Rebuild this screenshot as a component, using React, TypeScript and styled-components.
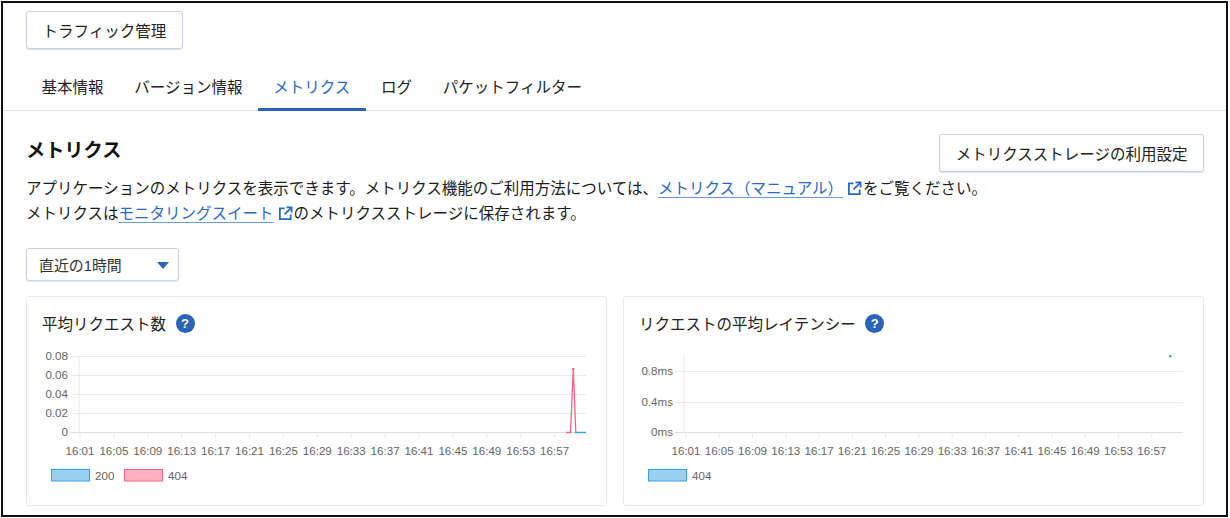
import React from "react";
import styled, { createGlobalStyle } from "styled-components";

const Global = createGlobalStyle`
  html, body { margin: 0; padding: 0; background: #fff; }
  body { font-family: "Liberation Sans", "Noto Sans CJK JP", sans-serif; color: #1c1c1c; }
`;

const Frame = styled.div`
  box-sizing: border-box;
  margin: 1px 0 0 1px;
  width: 1227px;
  height: 516px;
  border: 2px solid #111;
  padding-top: 8px;
  overflow: hidden;
  background: #fff;
`;

const Btn = styled.button`
  box-sizing: border-box;
  height: 38px;
  padding: 0 15.5px;
  background: #fff;
  border: 1px solid #c9d0e0;
  border-radius: 3px;
  box-shadow: 0 1px 1px rgba(120, 135, 170, 0.25);
  font: inherit;
  font-size: 15.5px;
  color: #222;
  white-space: nowrap;
`;

const Top = styled.div`
  padding-left: 23px;
`;

const TabBar = styled.div`
  display: flex;
  height: 62px;
  box-sizing: border-box;
  padding: 19px 0 0 23px;
  border-bottom: 1px solid #dfe3ec;
`;

const Tab = styled.div<{ $active?: boolean }>`
  box-sizing: border-box;
  height: 43px;
  padding: 0 15.4px;
  line-height: 40px;
  font-size: 15.5px;
  white-space: nowrap;
  color: ${(p) => (p.$active ? "#2a69c4" : "#222")};
  border-bottom: 3px solid ${(p) => (p.$active ? "#2a63b7" : "transparent")};
`;

const Section = styled.div`
  padding: 23px 22px 0 23px;
`;

const HeadRow = styled.div`
  display: flex;
  justify-content: space-between;
  align-items: flex-start;
  height: 38px;
`;

const Heading = styled.h2`
  margin: 0;
  font-size: 19.2px;
  line-height: 34px;
  font-weight: 700;
  color: #111;
`;

const Para = styled.p`
  margin: 4px 0 0;
  font-size: 15.5px;
  line-height: 25px;
  color: #1c1c1c;
  white-space: nowrap;
`;

const A = styled.a`
  color: #2a69c4;
  text-decoration: underline;
  text-decoration-color: #6a9bdc;
  text-decoration-thickness: 1px;
  text-underline-offset: 3px;
`;

const ExtIcon = styled.svg`
  width: 15px;
  height: 15px;
  margin: 0 1px 0 4px;
  vertical-align: -2px;
`;

const Select = styled.div`
  box-sizing: border-box;
  display: flex;
  align-items: center;
  justify-content: space-between;
  width: 153px;
  height: 33px;
  margin-top: 22px;
  padding: 0 7px 1px 12px;
  border: 1px solid #c9d0e0;
  border-radius: 3px;
  box-shadow: 0 1px 1px rgba(120, 135, 170, 0.2);
  font-size: 14.9px;
  color: #333;
`;

const Arrow = styled.span`
  width: 0;
  height: 0;
  margin-top: 2px;
  margin-right: 2px;
  border-left: 6px solid transparent;
  border-right: 6px solid transparent;
  border-top: 7px solid #2a63b7;
`;

const Cards = styled.div`
  display: grid;
  grid-template-columns: 581px 581px;
  gap: 16px;
  margin-top: 15px;
`;

const Card = styled.div`
  box-sizing: border-box;
  height: 210px;
  padding: 0 16px;
  border: 1px solid #e7e9ef;
  border-radius: 3px;
`;

const CardHead = styled.div`
  box-sizing: border-box;
  display: flex;
  align-items: center;
  gap: 9.5px;
  height: 48px;
  padding-top: 4px;
  margin-left: -1px;
  font-size: 15.5px;
  color: #222;
`;

const Help = styled.span`
  display: flex;
  align-items: center;
  justify-content: center;
  width: 19px;
  height: 19px;
  border-radius: 50%;
  background: #2a63b7;
  color: #fff;
  font-size: 13px;
  font-weight: 700;
`;

const ChartSvg = styled.svg`
  display: block;
  width: 549px;
  height: 145px;
  font-family: "Liberation Sans", sans-serif;
  font-size: 11.6px;
  fill: #666;
`;

const Legend = styled.g`
  font-size: 11.6px;
`;

const times = ["16:01","16:05","16:09","16:13","16:17","16:21","16:25","16:29","16:33","16:37","16:41","16:45","16:49","16:53","16:57"];
const GRID = "#e8e9ee";
const BLUE = "#36a2eb";
const PINK = "#ff6384";

function Ext() {
  return (
    <ExtIcon viewBox="0 0 16 16" fill="none" stroke="#2a69c4" strokeWidth="1.9">
      <path d="M7 2.5H2v11.5h11.5V9" />
      <path d="M9 1.5h5.5V7" />
      <path d="M14 2L7 9" />
    </ExtIcon>
  );
}

type Y = { y: number; label: string };

function Chart(props: {
  ox: number;
  axisX: number;
  endX: number;
  topY: number;
  firstTick: number;
  step: number;
  ys: Y[];
  legend: { x: number; color: string; fill: string; label: string }[];
  children?: React.ReactNode;
}) {
  const { ox, axisX, endX, topY, firstTick, step, ys, legend, children } = props;
  const oy = 345;
  const bottom = 432.5 - oy;
  return (
    <ChartSvg viewBox="0 0 549 145">
      <line x1={axisX - ox} x2={axisX - ox} y1={topY - oy} y2={bottom} stroke={GRID} strokeWidth="1" />
      {ys.map((t) => (
        <g key={t.label}>
          <line x1={axisX - 8.5 - ox} x2={endX - ox} y1={t.y - oy} y2={t.y - oy} stroke={t.y > 432 ? "#dcdde3" : GRID} strokeWidth="1" />
          <text x={axisX - 11 - ox} y={t.y - oy + 3.5} textAnchor="end">{t.label}</text>
        </g>
      ))}
      {times.map((t, i) => {
        const x = firstTick + step * i - ox;
        return (
          <g key={t}>
            <line x1={x} x2={x} y1={bottom} y2={bottom + 5} stroke={GRID} strokeWidth="1" />
            <text x={x} y={109.5} textAnchor="middle">{t}</text>
          </g>
        );
      })}
      {children}
      <Legend>
        {legend.map((l) => (
          <g key={l.label + l.x}>
            <rect x={l.x - ox + 0.5} y={124.5} width={38} height={11.5} fill={l.fill} stroke={l.color} strokeWidth="1" />
            <text x={l.x - ox + 44} y={134.5}>{l.label}</text>
          </g>
        ))}
      </Legend>
    </ChartSvg>
  );
}

export default function App() {
  return (
    <>
      <Global />
      <Frame>
        <Top>
          <Btn>トラフィック管理</Btn>
        </Top>
        <TabBar>
          <Tab>基本情報</Tab>
          <Tab>バージョン情報</Tab>
          <Tab $active>メトリクス</Tab>
          <Tab>ログ</Tab>
          <Tab>パケットフィルター</Tab>
        </TabBar>
        <Section>
          <HeadRow>
            <Heading>メトリクス</Heading>
            <Btn>メトリクスストレージの利用設定</Btn>
          </HeadRow>
          <Para>
            アプリケーションのメトリクスを表示できます。メトリクス機能のご利用方法については、
            <A>メトリクス（マニュアル）</A>
            <Ext />
            をご覧ください。
            <br />
            メトリクスは<A>モニタリングスイート</A>
            <Ext />
            のメトリクスストレージに保存されます。
          </Para>
          <Select>
            直近の1時間
            <Arrow />
          </Select>
          <Cards>
            <Card>
              <CardHead>
                平均リクエスト数
                <Help>?</Help>
              </CardHead>
              <Chart
                ox={43}
                axisX={79}
                endX={586}
                topY={356.5}
                firstTick={80}
                step={33.9}
                ys={[
                  { y: 356.5, label: "0.08" },
                  { y: 375.5, label: "0.06" },
                  { y: 394.5, label: "0.04" },
                  { y: 413.5, label: "0.02" },
                  { y: 432.5, label: "0" },
                ]}
                legend={[
                  { x: 51, color: BLUE, fill: "#9bd0f5", label: "200" },
                  { x: 124, color: PINK, fill: "#ffb1c1", label: "404" },
                ]}
              >
                <path d="M523 87.5H527.5L530.3 24L532.8 87.5" fill="none" stroke={PINK} strokeWidth="1.3" />
                <circle cx="530.3" cy="24" r="1.3" fill={PINK} />
                <line x1="532" x2="543" y1="87.5" y2="87.5" stroke={BLUE} strokeWidth="1.5" />
              </Chart>
            </Card>
            <Card>
              <CardHead>
                リクエストの平均レイテンシー
                <Help>?</Help>
              </CardHead>
              <Chart
                ox={640}
                axisX={684}
                endX={1183}
                topY={356}
                firstTick={686}
                step={33.27}
                ys={[
                  { y: 371.5, label: "0.8ms" },
                  { y: 402.5, label: "0.4ms" },
                  { y: 432.5, label: "0ms" },
                ]}
                legend={[{ x: 648, color: BLUE, fill: "#9bd0f5", label: "404" }]}
              >
                <circle cx="530.3" cy="11.3" r="1.3" fill={BLUE} />
              </Chart>
            </Card>
          </Cards>
        </Section>
      </Frame>
    </>
  );
}
